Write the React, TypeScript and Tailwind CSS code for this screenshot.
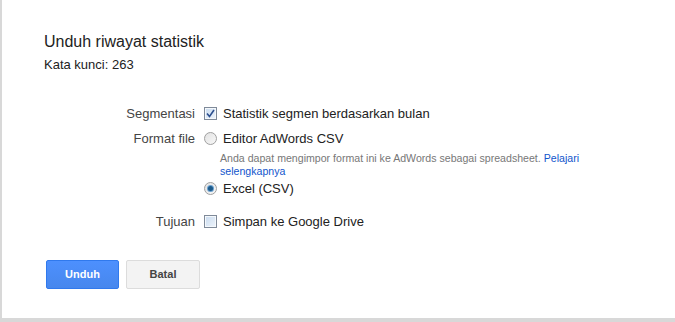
import React from "react";

function Checkbox({ checked }: { checked?: boolean }) {
  return (
    <span className="relative inline-flex h-[13px] w-[13px] shrink-0 items-center justify-center border border-[#7f8a99] bg-gradient-to-br from-[#c9dbef] to-[#eef4fb] shadow-[inset_0_0_0_1px_#f4f8fc]">
      {checked && (
        <svg width="9" height="9" viewBox="0 0 9 9">
          <path d="M1 4.5 L3.5 7.5 L8 1" fill="none" stroke="#2c4f8f" strokeWidth="1.6" />
        </svg>
      )}
    </span>
  );
}

function Radio({ checked }: { checked?: boolean }) {
  return (
    <span className="relative inline-flex h-[13px] w-[13px] shrink-0 items-center justify-center rounded-full border border-[#a0a0a0] bg-gradient-to-br from-[#e2e2e2] to-[#f8f8f8]">
      {checked && <span className="h-[5px] w-[5px] rounded-full bg-[#1c5a8a] shadow-[0_0_0_1px_#6aa0cf]" />}
    </span>
  );
}

export default function App() {
  return (
    <div className="flex h-[322px] w-[675px] flex-col bg-[#d8d8d8]" style={{ fontFamily: '"Liberation Sans", Arial, sans-serif' }}>
      <div className="ml-[2px] flex h-[318px] flex-col bg-white pl-[42px] text-[#222]">
        <div className="mt-[32px] text-[16px] leading-[20px]">Unduh riwayat statistik</div>
        <div className="mt-[5px] text-[13px] leading-[16px]">Kata kunci: 263</div>

        <div className="mt-[31px] flex flex-col text-[13px] leading-[19px]">
          <div className="flex items-center">
            <div className="w-[160px] pr-[9px] text-right text-[#444]">Segmentasi</div>
            <Checkbox checked />
            <span className="ml-[6px]">Statistik segmen berdasarkan bulan</span>
          </div>
          <div className="mt-[6px] flex items-center">
            <div className="w-[160px] pr-[9px] text-right text-[#444]">Format file</div>
            <Radio />
            <span className="ml-[6px]">Editor AdWords CSV</span>
          </div>
          <div className="ml-[176px] mt-[4px] text-[10.6px] leading-[13px] text-[#777]">
            Anda dapat mengimpor format ini ke AdWords sebagai spreadsheet. <span className="text-[#15c]">Pelajari</span>
            <br />
            <span className="text-[#15c]">selengkapnya</span>
          </div>
          <div className="mt-[1px] flex items-center">
            <div className="w-[160px] pr-[9px]" />
            <Radio checked />
            <span className="ml-[6px]">Excel (CSV)</span>
          </div>
          <div className="mt-[14px] flex items-center">
            <div className="w-[160px] pr-[9px] text-right text-[#444]">Tujuan</div>
            <Checkbox />
            <span className="ml-[6px]">Simpan ke Google Drive</span>
          </div>
        </div>

        <div className="mt-[29px] flex gap-[7px] pl-[2px]">
          <button className="h-[29px] w-[73px] rounded-[2px] border border-[#3079ed] bg-gradient-to-b from-[#4d90fe] to-[#4787ed] text-[11px] font-bold text-white">Unduh</button>
          <button className="h-[29px] w-[74px] rounded-[2px] border border-[#dcdcdc] bg-[#f3f3f3] text-[11px] font-bold text-[#444]">Batal</button>
        </div>
      </div>
    </div>
  );
}
